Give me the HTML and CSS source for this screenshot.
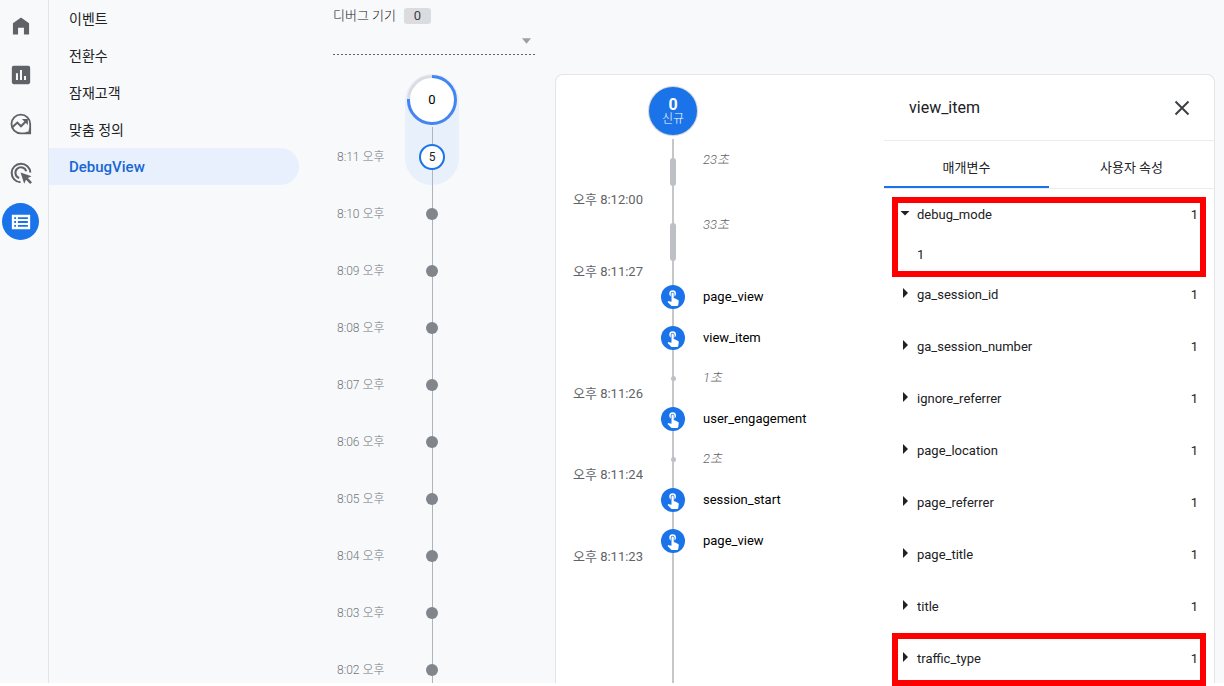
FILE: index.html
```html
<!DOCTYPE html>
<html lang="ko">
<head>
<meta charset="utf-8">
<title>DebugView</title>
<meta name="viewport" content="width=device-width, initial-scale=1">
<link rel="stylesheet" href="styles.css">
</head>
<body>
<svg class="sprite" aria-hidden="true">
  <symbol id="tap" viewBox="0 0 24 24">
    <path d="M9 11.24V7.5a2.5 2.5 0 0 1 5 0v3.74c1.21-.81 2-2.18 2-3.74a4.5 4.5 0 0 0-9 0c0 1.56.79 2.93 2 3.74zm9.84 4.63-4.54-2.26c-.17-.07-.35-.11-.54-.11H13v-6a1.5 1.5 0 0 0-3 0v10.74l-3.43-.72c-.08-.01-.15-.03-.24-.03-.31 0-.59.13-.79.33l-.79.8 4.94 4.94c.27.27.65.44 1.06.44h6.79c.75 0 1.33-.55 1.44-1.28l.75-5.27c.01-.07.02-.14.02-.2 0-.62-.38-1.16-.91-1.38z"/>
  </symbol>
</svg>
<div class="app">
  <nav class="rail" aria-label="주 메뉴">
    <a class="rail-link" href="#home" aria-label="홈"><svg viewBox="0 0 24 24"><path d="M12 2.6 3.2 9v12.200h5.600v-7.400h6.400v7.400h5.600V9z"/></svg></a>
    <a class="rail-link" href="#reports" aria-label="보고서"><svg viewBox="0 0 24 24"><path fill-rule="evenodd" d="M4 2h16a2 2 0 0 1 2 2v16a2 2 0 0 1-2 2H4a2 2 0 0 1-2-2V4a2 2 0 0 1 2-2zM6.500 10v7.500h2.200V10zm4.400-3.500v11h2.200v-11zm4.400 6.500v4.500h2.200V13z"/></svg></a>
    <a class="rail-link" href="#explore" aria-label="탐색"><svg viewBox="0 0 24 24"><path fill="none" stroke="currentColor" stroke-width="2" d="M22 12a10.200 10.200 0 1 0-10.200 10.200H22z"/><path fill="none" stroke="currentColor" stroke-width="2.200" d="m2.500 15.500 5.500-5 4 4L18 8.500"/><path d="M13 6.500h6.500V13z"/><path d="M22 15v7h-7c3.500-1 5.800-3.200 7-7z"/><circle cx="19.400" cy="19.400" r="1" fill="#f8f9fb"/></svg></a>
    <a class="rail-link" href="#ads" aria-label="광고"><svg viewBox="0 0 24 24"><path fill="none" stroke="currentColor" stroke-width="2.200" d="M11.500 22.200A10.200 10.200 0 1 1 22.200 11.500"/><path fill="none" stroke="currentColor" stroke-width="2.200" d="M10 17.500A6 6 0 1 1 17.700 10.200"/><path d="m11.500 11.500 12 4-4 2 4.500 4.500-2 2-4.500-4.600-2 4.300z"/></svg></a>
    <a class="rail-link current" href="#configure" aria-label="구성" aria-current="page"><svg viewBox="0 0 24 24"><path fill-rule="evenodd" d="M2 4h20v16H2zM4.600 6.700v2h2v-2zm4 0v2h10.900v-2zM4.600 11v2h2v-2zm4 0v2h10.900v-2zM4.600 15.300v2h2v-2zm4 0v2h10.900v-2z"/></svg></a>
  </nav>
  <nav class="menu" aria-label="구성">
    <a href="#events">이벤트</a>
    <a href="#conversions">전환수</a>
    <a href="#audiences">잠재고객</a>
    <a href="#definitions">맞춤 정의</a>
    <a class="selected" href="#debugview" aria-current="page">DebugView</a>
  </nav>
  <section class="minutes">
    <div class="device">
      <div class="device-head"><label for="device">디버그 기기</label><span class="count">0</span></div>
      <div class="device-field">
        <select id="device"><option></option></select>
        <svg class="caret" viewBox="0 0 10 6"><path d="M0 0h10L5 6z"/></svg>
      </div>
    </div>
    <ol class="minute-list">
      <li class="now">
        <span class="minute-time">8:11 오후</span>
        <div class="pill">
          <div class="ring"><svg viewBox="0 0 50 50"><circle class="ring-base" cx="25" cy="25" r="23.500"/><path class="ring-value" d="M25 1.500A23.500 23.500 0 1 1 1.500 24"/></svg><span>0</span></div>
          <div class="stem"></div>
          <button class="five" type="button">5</button>
          <div class="stem tail"></div>
        </div>
      </li>
      <li><span class="minute-time">8:10 오후</span><i class="dot"></i></li>
      <li><span class="minute-time">8:09 오후</span><i class="dot"></i></li>
      <li><span class="minute-time">8:08 오후</span><i class="dot"></i></li>
      <li><span class="minute-time">8:07 오후</span><i class="dot"></i></li>
      <li><span class="minute-time">8:06 오후</span><i class="dot"></i></li>
      <li><span class="minute-time">8:05 오후</span><i class="dot"></i></li>
      <li><span class="minute-time">8:04 오후</span><i class="dot"></i></li>
      <li><span class="minute-time">8:03 오후</span><i class="dot"></i></li>
      <li><span class="minute-time">8:02 오후</span><i class="dot"></i></li>
    </ol>
  </section>
  <main class="card">
    <section class="stream">
      <div class="stream-head"><div class="fresh"><strong>0</strong><span>신규</span></div></div>
      <ol class="events">
        <li class="pause medium"><time>오후 8:12:00</time><span class="track"><i class="bar"></i></span><em>23초</em></li>
        <li class="pause long"><time>오후 8:11:27</time><span class="track"><i class="bar"></i></span><em>33초</em></li>
        <li><span class="track"><span class="badge"><svg><use href="#tap"/></svg></span></span><button type="button">page_view</button></li>
        <li><span class="track"><span class="badge"><svg><use href="#tap"/></svg></span></span><button type="button">view_item</button></li>
        <li class="pause"><time>오후 8:11:26</time><span class="track"><i class="speck"></i></span><em>1초</em></li>
        <li><span class="track"><span class="badge"><svg><use href="#tap"/></svg></span></span><button type="button">user_engagement</button></li>
        <li class="pause"><time>오후 8:11:24</time><span class="track"><i class="speck"></i></span><em>2초</em></li>
        <li><span class="track"><span class="badge"><svg><use href="#tap"/></svg></span></span><button type="button">session_start</button></li>
        <li><time>오후 8:11:23</time><span class="track"><span class="badge"><svg><use href="#tap"/></svg></span></span><button type="button">page_view</button></li>
        <li class="rest"><span class="track"></span></li>
      </ol>
    </section>
    <aside class="details">
      <header>
        <h2>view_item</h2>
        <button class="close" type="button" aria-label="닫기"><svg viewBox="0 0 16 16"><path d="m1.500 1.500 13 13m0-13-13 13"/></svg></button>
      </header>
      <div class="tabs" role="tablist">
        <button type="button" role="tab" aria-selected="true">매개변수</button>
        <button type="button" role="tab" aria-selected="false">사용자 속성</button>
      </div>
      <div class="params">
        <details class="marked" open><summary><span>debug_mode</span><span>1</span></summary><p>1</p></details>
        <details><summary><span>ga_session_id</span><span>1</span></summary></details>
        <details><summary><span>ga_session_number</span><span>1</span></summary></details>
        <details><summary><span>ignore_referrer</span><span>1</span></summary></details>
        <details><summary><span>page_location</span><span>1</span></summary></details>
        <details><summary><span>page_referrer</span><span>1</span></summary></details>
        <details><summary><span>page_title</span><span>1</span></summary></details>
        <details><summary><span>title</span><span>1</span></summary></details>
        <details class="marked"><summary><span>traffic_type</span><span>1</span></summary></details>
      </div>
    </aside>
  </main>
</div>
</body>
</html>
```

FILE: styles.css
```css
* { box-sizing: border-box; }

body {
  margin: 0;
  height: 100vh;
  overflow: hidden;
  background: #fff;
  color: #202124;
  font: 13px/20px Roboto, "Noto Sans CJK KR", sans-serif;
}

button, select { font: inherit; color: inherit; border: 0; padding: 0; background: none; }
a { color: inherit; text-decoration: none; }
ol { list-style: none; margin: 0; padding: 0; }
svg { display: block; fill: currentColor; }
.sprite { display: none; }

.app {
  display: flex;
  height: calc(100vh - 3px);
  background: #f8f9fb;
}

/* Icon rail */
.rail {
  display: flex;
  flex: none;
  flex-direction: column;
  align-items: center;
  gap: 12px;
  width: 49px;
  padding: 7px 7px 0 0;
  border-right: 1px solid #e3e5e8;
  color: #5f6368;
}
.rail-link {
  display: grid;
  place-items: center;
  width: 37px;
  height: 37px;
  border-radius: 50%;
}
.rail-link svg { width: 22px; height: 22px; }
.rail-link.current { background: #1a73e8; color: #fff; }

/* Section menu */
.menu { flex: none; width: 250px; font-size: 14px; }
.menu a {
  display: flex;
  align-items: center;
  height: 37px;
  padding-left: 20px;
  border-radius: 0 19px 19px 0;
}
.menu .selected { background: #e8f0fe; color: #1967d2; font-size: 15px; font-weight: 500; }

/* Minute timeline */
.minutes { flex: none; width: 256px; padding: 5px 18px 0 34px; overflow: hidden; }
.device-head { display: flex; align-items: center; gap: 8px; height: 21px; }
.device-head label { font-weight: 300; }
.count {
  width: 27px;
  height: 16px;
  border-radius: 3px;
  background: #dadce0;
  line-height: 16px;
  text-align: center;
  color: #3c4043;
}
.device-field {
  position: relative;
  height: 29px;
  background: repeating-linear-gradient(90deg, #5f6368 0 2px, transparent 2px 4px) bottom / 100% 1px no-repeat;
}
.device-field select { display: block; width: 100%; height: 28px; appearance: none; }
.caret { position: absolute; right: 6px; top: 12px; width: 9px; height: 6px; color: #9aa0a6; pointer-events: none; }
.minute-list { margin-top: 19px; padding-left: 4px; }
.minute-list li {
  display: grid;
  grid-template-columns: 48px 54px;
  column-gap: 20px;
  align-items: center;
  height: 57px;
}
.minute-list .now { height: 111px; align-items: start; }
.minute-time { color: #72777c; font-size: 12px; font-weight: 300; white-space: nowrap; }
.now .minute-time { padding-top: 73px; }
.minute-list li:not(.now) .dot {
  display: grid;
  place-items: center;
  align-self: stretch;
  background: linear-gradient(#b0b3b8, #b0b3b8) center / 1px 100% no-repeat;
}
.dot::before { content: ""; width: 12px; height: 12px; border-radius: 50%; background: #80868b; }
.pill {
  display: flex;
  flex-direction: column;
  align-items: center;
  height: 111px;
  padding-top: 1px;
  border-radius: 27px;
  background: #e8f0fc;
}
.ring { display: grid; place-items: center; width: 50px; height: 50px; border-radius: 50%; background: #fff; color: #000; }
.ring > * { grid-area: 1 / 1; }
.ring svg { width: 50px; height: 50px; fill: none; stroke-width: 3; }
.ring-base { stroke: #dadce0; }
.ring-value { stroke: #4285f4; }
.stem { width: 1px; height: 17px; margin-top: 2px; background: #b0b3c0; }
.stem.tail { flex: 1; margin-top: 0; }
.five {
  width: 26px;
  height: 26px;
  border: 2px solid #1a73e8;
  border-radius: 50%;
  background: #fff;
  color: #202124;
  font-size: 12px;
  line-height: 22px;
}

/* Event card */
.card {
  display: flex;
  flex: 1;
  min-width: 0;
  margin: 74px 9px 0 0;
  border: 1px solid #e3e5e8;
  border-bottom: 0;
  border-radius: 8px 8px 0 0;
  background: #fff;
}
.stream { display: flex; flex: 1; flex-direction: column; min-width: 0; overflow: hidden; }
.stream-head { height: 64px; padding: 12px 0 0 93px; }
.fresh {
  display: flex;
  flex-direction: column;
  align-items: center;
  justify-content: center;
  width: 48px;
  height: 48px;
  border-radius: 50%;
  background: #1a73e8;
  box-shadow: 0 0 1px 1px #cfcfcf;
  color: #fff;
  font-size: 12px;
  line-height: 15px;
}
.fresh strong { padding-top: 2px; font-size: 16px; }
.fresh span { font-weight: 300; }
.events { display: flex; flex: 1; flex-direction: column; padding-left: 17px; }
.events li {
  display: grid;
  grid-template-columns: 70px 24px 1fr;
  grid-template-areas: "time track label";
  column-gap: 18px;
  align-items: center;
  height: 41px;
}
.events .pause { height: 40px; }
.events time {
  grid-area: time;
  align-self: end;
  color: #5f6368;
  line-height: 8px;
  white-space: nowrap;
}
.events em, .events button { grid-area: label; justify-self: start; }
.events em { color: #5f6368; font-weight: 300; }
.events button { color: #000; }
.track {
  display: grid;
  grid-area: track;
  place-items: center;
  align-self: stretch;
  background: linear-gradient(#c6c7c9, #c6c7c9) center / 2px 100% no-repeat;
}
.badge {
  display: grid;
  place-items: center;
  width: 24px;
  height: 24px;
  border-radius: 50%;
  background: #1a73e8;
  color: #fff;
}
.badge svg { width: 18px; height: 18px; }
.speck { width: 5px; height: 5px; border-radius: 50%; background: #bdc1c6; }
.bar { width: 6px; height: 28px; border-radius: 3px; background: #bdc1c6; }
.events .medium { height: 65px; }
.events .long { height: 72px; }
.medium .track, .long .track { align-items: start; padding-top: 19px; }
.long .bar { height: 38px; }
.medium em, .long em { align-self: start; padding-top: 11px; }
.events .rest { flex: 1; height: auto; }

/* Parameter details */
.details { flex: none; width: 330px; }
.details header {
  display: flex;
  align-items: center;
  justify-content: space-between;
  height: 66px;
  padding: 0 24px 0 25px;
  border-bottom: 1px solid #ebecee;
}
.details h2 { margin: 0; font-size: 16px; font-weight: 400; }
.close svg { width: 16px; height: 16px; fill: none; stroke: #3c4043; stroke-width: 2; }
.tabs { display: grid; grid-template-columns: 1fr 1fr; height: 48px; border-bottom: 1px solid #ebecee; }
.tabs button { padding-top: 8px; border-bottom: 2px solid transparent; }
.tabs [aria-selected="true"] { border-color: #1a73e8; }
.params { padding: 5px 8px 0; }
.params details { position: relative; }
.params summary {
  display: flex;
  align-items: center;
  justify-content: space-between;
  height: 52px;
  padding: 0 8px 0 11px;
  list-style: none;
}
.params summary::before {
  content: "";
  width: 5px;
  height: 10px;
  margin-bottom: 2px;
  background: #202124;
  clip-path: polygon(0 0, 100% 50%, 0 100%);
}
.params summary span { padding-top: 1px; }
.params summary span:first-child { flex: 1; padding-left: 9px; }
.params [open] summary { height: 40px; padding-left: 8px; }
.params [open] summary::before { width: 10px; height: 5px; clip-path: polygon(0 0, 100% 0, 50% 100%); }
.params [open] summary span:first-child { padding-left: 7px; }
.params p { margin: 0; padding: 11px 0 3px 25px; }
.marked::after {
  content: "";
  position: absolute;
  inset: 1px 0 -2px;
  border: 6px solid #f00;
  pointer-events: none;
}
.marked[open]::after { inset: 3px 0 -9px; }
```
